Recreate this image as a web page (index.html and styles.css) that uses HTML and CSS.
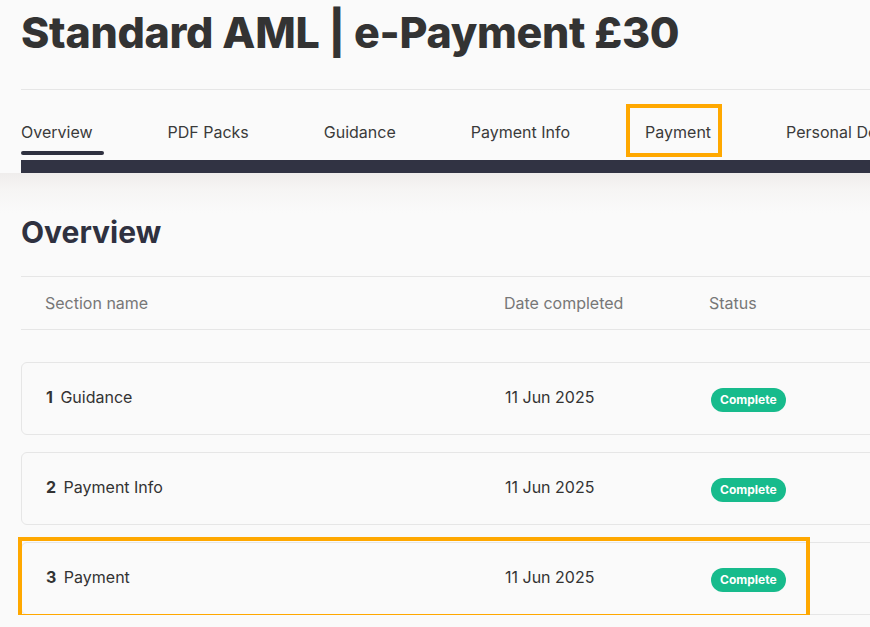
FILE: index.html
```html
<!DOCTYPE html>
<html>
<head>
<meta charset="utf-8">
<link rel="stylesheet" href="styles.css">
</head>
<body>
<div class="page">
  <header class="header">
    <h1 class="title">Standard AML | e-Payment £30</h1>
    <nav class="tabs">
      <span class="tab active">Overview</span>
      <span class="tab">PDF Packs</span>
      <span class="tab">Guidance</span>
      <span class="tab">Payment Info</span>
      <span class="tab highlighted">Payment</span>
      <span class="tab">Personal Details</span>
    </nav>
    <div class="darkbar"></div>
  </header>
  <main class="content">
    <h2 class="section-title">Overview</h2>
    <div class="table-head">
      <span class="col-name">Section name</span>
      <span class="col-date">Date completed</span>
      <span class="col-status">Status</span>
    </div>
    <div class="rows">
      <div class="row">
        <span class="col-name"><b>1</b> Guidance</span>
        <span class="col-date">11 Jun 2025</span>
        <span class="col-status"><span class="badge">Complete</span></span>
      </div>
      <div class="row">
        <span class="col-name"><b>2</b> Payment Info</span>
        <span class="col-date">11 Jun 2025</span>
        <span class="col-status"><span class="badge">Complete</span></span>
      </div>
      <div class="row highlighted-row">
        <span class="col-name"><b>3</b> Payment</span>
        <span class="col-date">11 Jun 2025</span>
        <span class="col-status"><span class="badge">Complete</span></span>
      </div>
    </div>
  </main>
</div>
</body>
</html>
```

FILE: styles.css
```css
html, body {
  margin: 0;
  padding: 0;
  background: #fafafa;
  overflow: hidden;
}
body {
  font-family: Inter, "Noto Sans", sans-serif;
  color: #333;
}
.page {
  width: 1200px;
}
.header {
  padding-left: 21px;
}
.title {
  margin: 0;
  padding-top: 6px;
  height: 90px;
  box-sizing: border-box;
  font-size: 43px;
  font-weight: 800;
  letter-spacing: -0.3px;
  color: #333333;
  line-height: 52px;
  border-bottom: 1px solid #e6e6e6;
}
.tabs {
  display: flex;
  gap: 64px;
  height: 70px;
  align-items: flex-start;
}
.tab {
  position: relative;
  font-size: 16px;
  color: #3a3a3a;
  padding: 32px 11px 0 0;
  height: 38px;
  line-height: 20px;
  white-space: nowrap;
}
.tab.active::after {
  content: "";
  position: absolute;
  left: 0;
  right: 0;
  top: 61px;
  height: 4px;
  border-radius: 2px;
  background: #2f3140;
}
.tab.highlighted::before {
  content: "";
  position: absolute;
  left: -19px;
  right: 0;
  top: 14px;
  bottom: 3px;
  border: 4px solid #ffa800;
}
.darkbar {
  height: 13px;
  background: #313343;
}
.content {
  padding: 41px 0 0 21px;
  background: linear-gradient(#efedec 0px, #f6f5f4 16px, #fafafa 40px);
}
.section-title {
  margin: 0;
  font-size: 30px;
  font-weight: 700;
  color: #2f3140;
  line-height: 36px;
  height: 62px;
}
.table-head {
  display: flex;
  align-items: center;
  height: 52px;
  border-top: 1px solid #e6e6e6;
  border-bottom: 1px solid #e6e6e6;
  font-size: 16px;
  color: #777;
}
.col-name {
  width: 459px;
  padding-left: 24px;
}
.col-date {
  width: 205px;
}
.col-status {
  flex: 1;
}
.rows {
  display: flex;
  flex-direction: column;
  gap: 17px;
  padding-top: 32px;
}
.row {
  position: relative;
  display: flex;
  align-items: center;
  height: 68px;
  padding-bottom: 3px;
  border: 1px solid #e6e6e6;
  border-radius: 6px;
  background: #fafafa;
  font-size: 16px;
  color: #333;
}
.row b {
  font-weight: 700;
  margin-right: 3px;
}
.badge {
  display: inline-block;
  margin-left: 1px;
  margin-top: 6px;
  height: 24px;
  line-height: 24px;
  padding: 0 9px;
  border-radius: 12px;
  background: #17bb8c;
  color: #fff;
  font-size: 12px;
  font-weight: 700;
}
.highlighted-row::after {
  content: "";
  position: absolute;
  left: -4px;
  top: -6px;
  width: 784px;
  height: 73px;
  border: 4px solid #ffa800;
}
```
